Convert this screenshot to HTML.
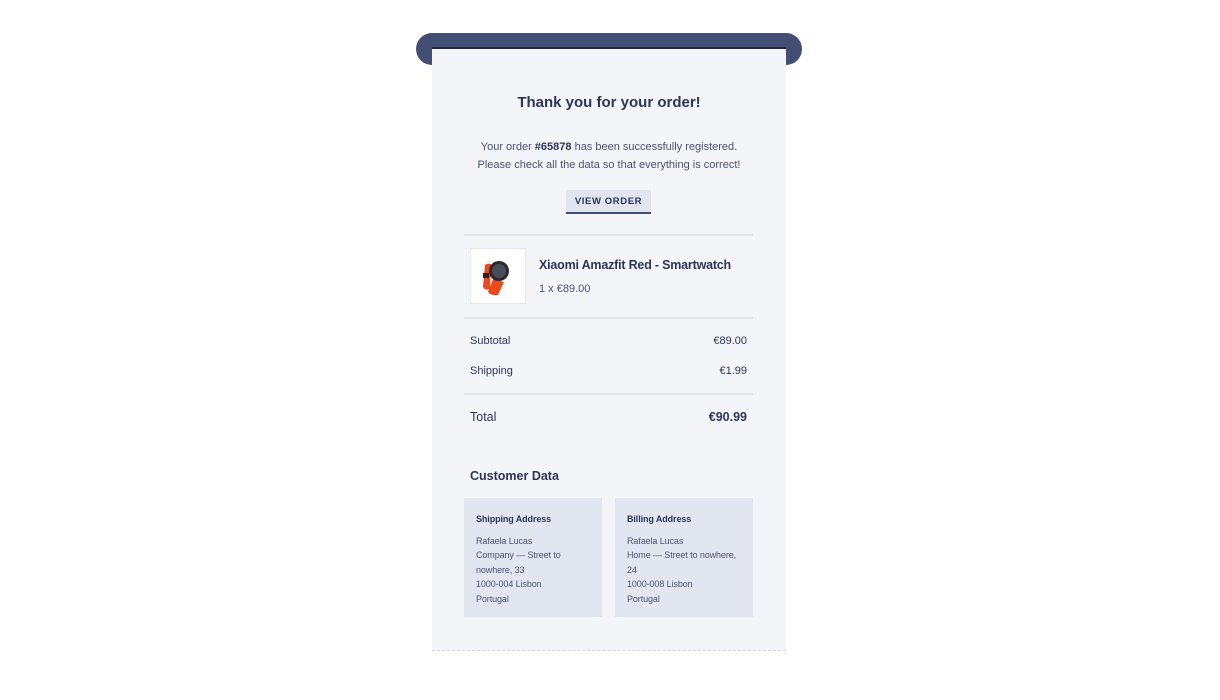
<!DOCTYPE html>
<html><head><style>
*{margin:0;padding:0;box-sizing:border-box}
body{width:1220px;height:700px;background:#fff;font-family:"Liberation Sans",sans-serif;color:#2c3558;position:relative;overflow:hidden}
.bar{position:absolute;left:416px;top:33px;width:386px;height:32px;background:#424f72;border-radius:16px}
.paper{position:absolute;left:432px;top:48px;width:354px;height:603px;background:#f3f5f9;border-bottom:1px dashed #cfd5e2}
.a{position:absolute;white-space:nowrap}
.c{left:0;width:354px;text-align:center}
.hr{position:absolute;left:32px;width:289px;height:2px;background:#e0e4ed}
.box{position:absolute;top:450px;width:138px;height:119px;background:#e2e6f0;padding:14px 12px;font-size:9px;line-height:14.6px;color:#4a5372;letter-spacing:-.1px}
.box b{display:block;color:#2c3558;margin-bottom:7px;font-size:9px}
</style></head><body>
<div class="bar"></div>
<div class="paper">
<div class="a c" style="top:46px;font-size:15px;font-weight:bold">Thank you for your order!</div>
<div class="a c" style="top:90px;font-size:11px;line-height:18px;color:#4a5372">Your order <b style="color:#2c3558">#65878</b> has been successfully registered.<br>Please check all the data so that everything is correct!</div>
<div class="a" style="left:134px;top:142px;width:85px;height:24px;background:#e1e5ef;border-bottom:2px solid #424f72;font-size:9.5px;font-weight:bold;letter-spacing:.6px;text-align:center;line-height:23px">VIEW ORDER</div>
<div class="hr" style="top:186px"></div>
<div class="a" style="left:38px;top:200px;width:56px;height:56px;background:#fff;border:1px solid #e3e6ee">
<svg width="56" height="56" viewBox="0 0 56 56"><path d="M14 16 Q16 14 20 15 L19 40 Q14 42 12 38 Z" fill="#e84a1c"/><path d="M22 30 L33 33 L27 46 Q20 47 17 43 Z" fill="#e84a1c"/><circle cx="28" cy="22" r="10" fill="#2a2a2e"/><circle cx="28" cy="22" r="7" fill="#4a4e58"/><path d="M12 24h6v5h-6z" fill="#222"/></svg></div>
<div class="a" style="left:107px;top:210px;font-size:12.5px;font-weight:bold;letter-spacing:-.2px">Xiaomi Amazfit Red - Smartwatch</div>
<div class="a" style="left:107px;top:235px;font-size:11px;color:#4a5372">1 x €89.00</div>
<div class="hr" style="top:269px"></div>
<div class="a" style="left:38px;top:287px;font-size:11px">Subtotal</div>
<div class="a" style="right:39px;top:287px;font-size:11px">€89.00</div>
<div class="a" style="left:38px;top:317px;font-size:11px">Shipping</div>
<div class="a" style="right:39px;top:317px;font-size:11px">€1.99</div>
<div class="hr" style="top:345px"></div>
<div class="a" style="left:38px;top:362px;font-size:12.5px">Total</div>
<div class="a" style="right:39px;top:362px;font-size:12.5px;font-weight:bold">€90.99</div>
<div class="a" style="left:38px;top:421px;font-size:12.5px;font-weight:bold">Customer Data</div>
<div class="box" style="left:32px"><b>Shipping Address</b>Rafaela Lucas<br>Company — Street to<br>nowhere, 33<br>1000-004 Lisbon<br>Portugal</div>
<div class="box" style="left:183px"><b>Billing Address</b>Rafaela Lucas<br>Home — Street to nowhere,<br>24<br>1000-008 Lisbon<br>Portugal</div>
</div>
<div style="position:absolute;left:432px;top:47px;width:354px;height:2px;background:#1f2740"></div>
</body></html>
